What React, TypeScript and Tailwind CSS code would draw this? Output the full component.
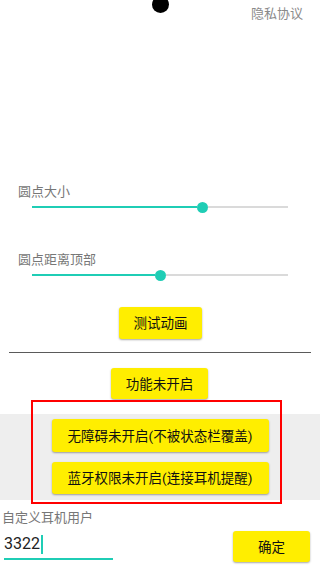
import React from "react";

const font = { fontFamily: "Roboto, 'Noto Sans CJK SC', 'Noto Sans', sans-serif" };

function Btn({ children, className }: { children: React.ReactNode; className: string }) {
  return (
    <div
      className={
        "flex items-center justify-center bg-[#ffee00] rounded-[3px] shadow-[0_1px_2px_rgba(0,0,0,0.35)] text-[13.5px] leading-[16px] font-normal text-[#111] " +
        className
      }
    >
      {children}
    </div>
  );
}

export default function App() {
  return (
    <div className="relative w-[320px] h-[568px] bg-white overflow-hidden flex flex-col" style={font}>
      <div className="absolute left-[151.5px] top-[-4px] w-[17px] h-[17px] rounded-full bg-black" />

      <div className="flex justify-end pt-[6px] pr-[17px]">
        <span className="text-[13px] leading-[16px] text-[#8a8a8a]">隐私协议</span>
      </div>

      <div className="mt-[162px] pl-[18px] text-[13px] leading-[16px] text-[#777]">圆点大小</div>
      <div className="ml-[32px] w-[256px] h-[14px] flex items-center">
        <div className="w-[165px] h-[2px] bg-[#1fcdb5]" />
        <div className="w-[11px] h-[11px] rounded-full bg-[#1fcdb5]" />
        <div className="flex-1 h-[2px] bg-[#dadada]" />
      </div>

      <div className="mt-[38px] pl-[18px] text-[13px] leading-[16px] text-[#777]">圆点距离顶部</div>
      <div className="ml-[32px] w-[256px] h-[14px] flex items-center">
        <div className="w-[123px] h-[2px] bg-[#1fcdb5]" />
        <div className="w-[11px] h-[11px] rounded-full bg-[#1fcdb5]" />
        <div className="flex-1 h-[2px] bg-[#dadada]" />
      </div>

      <Btn className="mt-[25px] ml-[119px] w-[83px] h-[32px]">测试动画</Btn>

      <div className="mt-[13px] ml-[9px] w-[302px] h-px bg-[#5a5a5a]" />

      <Btn className="mt-[15px] ml-[111px] w-[97px] h-[31px]">功能未开启</Btn>

      <div className="mt-[15px] h-[86px] bg-[#eeeeee] flex flex-col items-center pt-[5px] gap-[10px]">
        <Btn className="w-[217px] h-[33px]">无障碍未开启(不被状态栏覆盖)</Btn>
        <Btn className="w-[217px] h-[32px]">蓝牙权限未开启(连接耳机提醒)</Btn>
      </div>

      <div className="mt-[10px] pl-[2px] text-[13px] leading-[16px] text-[#777]">自定义耳机用户</div>

      <div className="flex items-start">
        <div className="mt-[8px] ml-[4px] w-[109px] border-b-2 border-[#1fcdb5] pb-[4px] flex items-center">
          <span className="text-[16px] leading-[20px] text-[#222]">3322</span>
          <span className="ml-[1px] w-[2px] h-[19px] bg-[#1fcdb5]" />
        </div>
        <Btn className="mt-[5px] ml-auto mr-[10px] w-[77px] h-[31px]">确定</Btn>
      </div>

      <div className="absolute left-[31px] top-[400px] w-[251px] h-[104px] border-2 border-[#ff0000]" />
    </div>
  );
}
